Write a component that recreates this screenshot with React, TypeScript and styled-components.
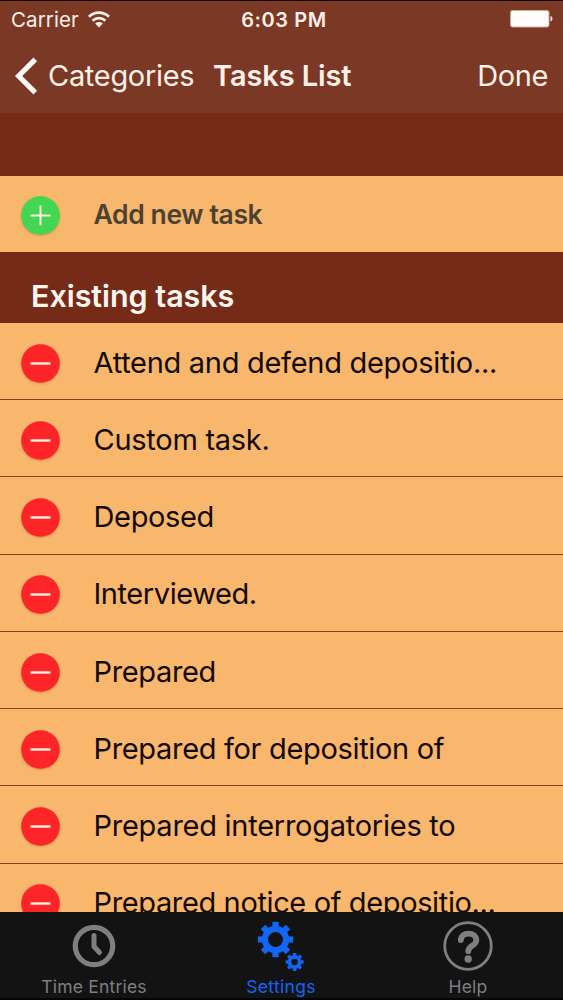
import React from "react";
import styled, { createGlobalStyle } from "styled-components";

const Global = createGlobalStyle`
  * { box-sizing: border-box; }
  body { margin: 0; background: #762b18; }
`;

const Screen = styled.div`
  width: 563px;
  height: 1000px;
  display: flex;
  flex-direction: column;
  overflow: hidden;
  background: #762b18;
  font-family: Inter, "Liberation Sans", sans-serif;
`;

const Header = styled.header`
  height: 113px;
  flex: none;
  background: #7b3825;
  border-top: 1px solid #0c0302;
  color: #fff1e8;
`;

const StatusBar = styled.div`
  height: 37px;
  padding: 0 10px 0 11px;
  display: grid;
  grid-template-columns: 1fr auto 1fr;
  align-items: center;
`;

const Carrier = styled.div`
  display: flex;
  align-items: center;
  gap: 9px;
  padding-top: 1px;

  svg { margin-bottom: 2px; }
`;

const Label = styled.span<{ $size: number; $weight?: number; $spacing?: number }>`
  font-size: ${(p) => p.$size}px;
  font-weight: ${(p) => p.$weight ?? 400};
  letter-spacing: ${(p) => p.$spacing ?? 0}px;
  line-height: 1.2;
  white-space: nowrap;
`;

const Clock = styled.div`
  display: flex;
  padding-left: 4px;
`;

const Battery = styled.svg`
  justify-self: end;
  margin-bottom: 2px;
`;

const NavBar = styled.nav`
  height: 75px;
  padding: 0 15px;
  display: flex;
  align-items: center;

  span { padding-top: 1px; }
`;

const Back = styled.div`
  width: 198px;
  display: flex;
  align-items: center;
  gap: 10px;
`;

const Done = styled.div`
  margin-left: auto;
  display: flex;
`;

const List = styled.main`
  flex: 1;
  min-height: 0;
  overflow: hidden;
  padding-top: 62.6px;
`;

const Row = styled.div<{ $height: number; $line?: boolean }>`
  height: ${(p) => p.$height}px;
  padding: ${(p) => (p.$line ? 4 : 2)}px 0 0 21px;
  display: flex;
  align-items: center;
  gap: 33.5px;
  background: #f9b66d;
  color: ${(p) => (p.$line ? "#120a04" : "#4c4234")};
  border-bottom: ${(p) => (p.$line ? "1px solid #85421f" : "0")};
`;

const Badge = styled.svg<{ $add?: boolean }>`
  flex: none;
  margin-top: ${(p) => (p.$add ? 2 : 0)}px;
  overflow: visible;
  filter: drop-shadow(0 1px 1px rgba(120, 70, 10, 0.3));
`;

const SectionTitle = styled.h2`
  height: 71.4px;
  margin: 0;
  padding: 26.5px 0 0 31px;
  display: flex;
  color: #fff6f0;
`;

const TabBar = styled.footer`
  height: 88px;
  flex: none;
  display: grid;
  grid-template-columns: repeat(3, 187px);
  background: #131314;
  border-bottom: 2px solid #050506;
`;

const Tab = styled.div<{ $active?: boolean }>`
  display: flex;
  flex-direction: column;
  align-items: center;
  padding: 8px 0 0 1px;
  gap: 4px;
  color: ${(p) => (p.$active ? "#1266f5" : "#7f7f81")};
`;

const tasks = [
  { name: "Attend and defend depositio...", spacing: -0.29 },
  { name: "Custom task.", spacing: -0.27 },
  { name: "Deposed", spacing: -0.35 },
  { name: "Interviewed.", spacing: -0.42 },
  { name: "Prepared", spacing: -0.36 },
  { name: "Prepared for deposition of", spacing: -0.33 },
  { name: "Prepared interrogatories to", spacing: -0.26 },
  { name: "Prepared notice of depositio...", spacing: -0.37 },
];

function ActionBadge({ add }: { add?: boolean }) {
  return (
    <Badge $add={add} width="39" height="39" viewBox="0 0 39 39">
      <circle cx="19.5" cy="19.5" r="19.3" fill={add ? "#43d651" : "#fd2528"} />
      <path d={add ? "M9.500 19.500h20M19.500 9.500v20" : "M9.500 19.500h20"} stroke="#ffeee6" strokeWidth={add ? 2 : 2.4} />
    </Badge>
  );
}

function Gear({ x, y, r, hole, tooth }: { x: number; y: number; r: number; hole: number; tooth: number }) {
  const ring = (r * 0.77 + hole) / 2;
  return (
    <g transform={`translate(${x} ${y})`}>
      <circle r={ring} fill="none" stroke="currentColor" strokeWidth={r * 0.77 - hole} />
      {[0, 45, 90, 135, 180, 225, 270, 315].map((a) => (
        <rect key={a} x={-tooth / 2} y={-r} width={tooth} height={r * 0.32} fill="currentColor" transform={`rotate(${a})`} />
      ))}
    </g>
  );
}

export default function App() {
  return (
    <Screen>
      <Global />
      <Header>
        <StatusBar>
          <Carrier>
            <Label $size={20.5} $spacing={0.1}>Carrier</Label>
            <svg width="22" height="17" viewBox="0 0 22 17" fill="none" stroke="currentColor" strokeWidth="2.7">
              <path d="M1 5.800C6.600.3 15.400.3 21 5.800M4.600 9.700c3.600-3.500 9.200-3.500 12.800 0" />
              <path d="M11 16.500 7.200 12.500c2-2 5.600-2 7.600 0Z" fill="currentColor" stroke="none" />
            </svg>
          </Carrier>
          <Clock><Label $size={20} $weight={600} $spacing={0.6}>6:03 PM</Label></Clock>
          <Battery width="43" height="18" viewBox="0 0 43 18">
            <rect x=".5" y=".5" width="38.5" height="16.5" rx="2" fill="#fffdfb" stroke="#d5aa9b" />
            <path d="M40.500 6q2 .5 2 2.800t-2 2.800Z" fill="#fff1e8" />
          </Battery>
        </StatusBar>
        <NavBar>
          <Back>
            <svg width="23" height="38" viewBox="0 0 23 38" fill="none" stroke="#fffaf6" strokeWidth="5.2">
              <path d="M20.300 2.300 3.600 19l16.700 16.700" />
            </svg>
            <Label $size={29} $spacing={-0.3}>Categories</Label>
          </Back>
          <Label $size={29} $weight={600} $spacing={-0.1}>Tasks List</Label>
          <Done><Label $size={29} $spacing={-0.4}>Done</Label></Done>
        </NavBar>
      </Header>
      <List>
        <Row $height={76}>
          <ActionBadge add />
          <Label $size={26.5} $weight={600} $spacing={-0.38}>Add new task</Label>
        </Row>
        <SectionTitle>
          <Label $size={30.5} $weight={600} $spacing={-0.05}>Existing tasks</Label>
        </SectionTitle>
        {tasks.map((task) => (
          <Row key={task.name} $height={77.25} $line>
            <ActionBadge />
            <Label $size={29} $spacing={task.spacing}>{task.name}</Label>
          </Row>
        ))}
      </List>
      <TabBar>
        <Tab>
          <svg width="52" height="52" viewBox="0 0 52 52" fill="none" stroke="currentColor">
            <circle cx="26" cy="26" r="18.700" strokeWidth="5.200" />
            <path d="M26 15.500v11l5.500 6" strokeWidth="5" strokeLinecap="round" strokeLinejoin="round" />
          </svg>
          <Label $size={17.5} $spacing={0.2}>Time Entries</Label>
        </Tab>
        <Tab $active>
          <svg width="52" height="52" viewBox="0 0 52 52">
            <Gear x={20.5} y={19.5} r={17.7} hole={7.5} tooth={6.2} />
            <Gear x={39.6} y={42} r={9} hole={3.2} tooth={3.4} />
          </svg>
          <Label $size={17.5} $spacing={0.3}>Settings</Label>
        </Tab>
        <Tab>
          <svg width="52" height="52" viewBox="0 0 52 52" fill="none" stroke="currentColor">
            <circle cx="26" cy="26" r="23.300" strokeWidth="2.800" />
            <path d="M18.800 20.200c.5-9 15.500-8.700 15.500 0 0 5.500-8 5.500-8 11" strokeWidth="5.800" strokeLinecap="round" />
            <circle cx="26.200" cy="39" r="3.700" fill="currentColor" stroke="none" />
          </svg>
          <Label $size={17.5} $spacing={0.2}>Help</Label>
        </Tab>
      </TabBar>
    </Screen>
  );
}
